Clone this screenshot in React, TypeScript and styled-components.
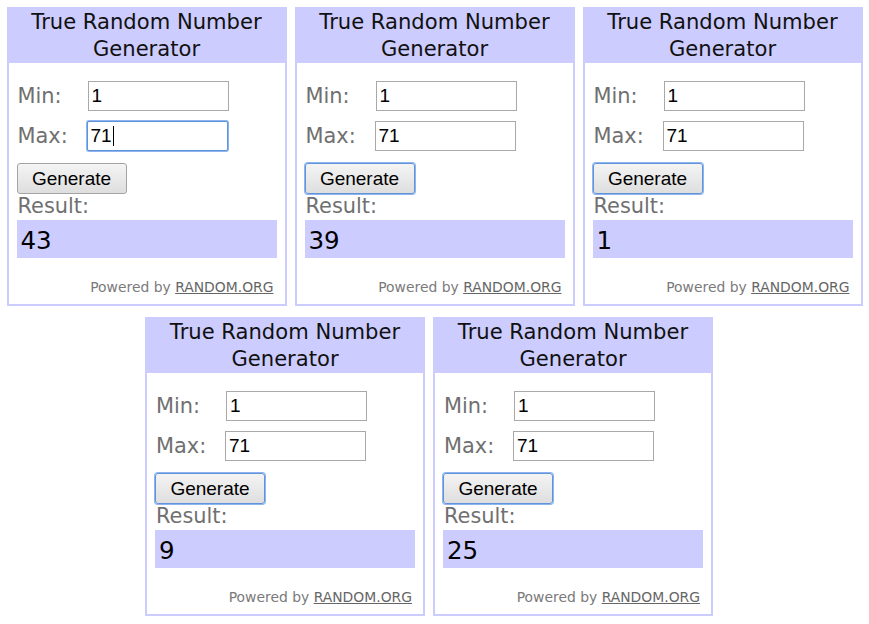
import React from "react";
import styled, { createGlobalStyle } from "styled-components";

const GlobalStyle = createGlobalStyle`
  html, body {
    margin: 0;
    padding: 0;
    background: #ffffff;
  }
  body {
    font-family: "DejaVu Sans", Verdana, sans-serif;
  }
`;

const Page = styled.div`
  display: flex;
  flex-direction: column;
  gap: 11px;
  padding-top: 7px;
  width: 869px;
`;

const Row = styled.div<{ $shift?: number }>`
  display: flex;
  justify-content: center;
  gap: 8px;
  padding-right: ${(p) => p.$shift ?? 0}px;
`;

const Card = styled.div`
  box-sizing: border-box;
  width: 280px;
  height: 299px;
  border: 2px solid #ccccff;
  background: #ffffff;
  display: flex;
  flex-direction: column;
`;

const Header = styled.div`
  background: #ccccff;
  height: 54px;
  box-sizing: border-box;
  padding-top: 0;
  text-align: center;
  font-family: "DejaVu Sans", Verdana, sans-serif;
  font-size: 21.1px;
  line-height: 26.5px;
  color: #111111;
`;

const Body = styled.div`
  display: flex;
  flex-direction: column;
  padding: 0 8px;
  flex: 1;
`;

const FieldRow = styled.div<{ $top: number }>`
  display: flex;
  align-items: center;
  margin-top: ${(p) => p.$top}px;
`;

const Label = styled.div`
  width: 70px;
  flex: none;
  font-family: "DejaVu Sans", Verdana, sans-serif;
  font-size: 20.9px;
  color: #707070;
  padding-left: 1px;
  box-sizing: border-box;
`;

const Field = styled.div<{ $focused?: boolean; $nudge?: number }>`
  box-sizing: border-box;
  width: 141px;
  height: 30px;
  margin-left: ${(p) => p.$nudge ?? 0}px;
  border: 1px solid ${(p) => (p.$focused ? "#5f93dc" : "#a9a9a9")};
  box-shadow: ${(p) => (p.$focused ? "0 0 0 1px #8db4ec" : "none")};
  border-radius: ${(p) => (p.$focused ? "2px" : "0")};
  background: #ffffff;
  display: flex;
  align-items: center;
  padding-left: 3px;
  font-family: "Liberation Sans", Arial, sans-serif;
  font-size: 19px;
  color: #000000;
`;

const Caret = styled.span`
  display: inline-block;
  width: 1px;
  height: 20px;
  background: #000000;
  margin-left: 1px;
`;

const Button = styled.button<{ $focused?: boolean }>`
  box-sizing: border-box;
  margin-top: 12px;
  align-self: flex-start;
  width: 110px;
  height: 31px;
  padding: 0;
  border: 1px solid ${(p) => (p.$focused ? "#5f93dc" : "#a3a3a3")};
  box-shadow: ${(p) => (p.$focused ? "0 0 0 1px #8db4ec" : "none")};
  border-radius: 3px;
  background: linear-gradient(#f4f4f4, #dedede);
  font-family: "Liberation Sans", Arial, sans-serif;
  font-size: 19px;
  color: #000000;
  cursor: pointer;
`;

const ResultLabel = styled.div`
  margin-top: 0px;
  font-family: "DejaVu Sans", Verdana, sans-serif;
  font-size: 20.9px;
  line-height: 24px;
  color: #707070;
  padding-left: 1px;
`;

const ResultBox = styled.div`
  margin-top: 2px;
  height: 38px;
  background: #ccccff;
  display: flex;
  align-items: center;
  padding-left: 4px;
  padding-top: 2px;
  box-sizing: border-box;
  font-family: "DejaVu Sans", Verdana, sans-serif;
  font-size: 24.5px;
  color: #000000;
`;

const Powered = styled.div`
  margin-top: 21px;
  text-align: right;
  padding-right: 3px;
  font-family: "DejaVu Sans", Verdana, sans-serif;
  font-size: 13.9px;
  line-height: 17px;
  color: #7a7a7a;
`;

const OrgLink = styled.span`
  color: #666666;
  text-decoration: underline;
`;

type WidgetProps = {
  result: string;
  maxFocused?: boolean;
  buttonFocused?: boolean;
};

function Widget({ result, maxFocused, buttonFocused }: WidgetProps) {
  return (
    <Card>
      <Header>
        True Random Number
        <br />
        Generator
      </Header>
      <Body>
        <FieldRow $top={18}>
          <Label>Min:</Label>
          <Field $nudge={1}>1</Field>
        </FieldRow>
        <FieldRow $top={10}>
          <Label>Max:</Label>
          <Field $focused={maxFocused}>
            71
            {maxFocused && <Caret />}
          </Field>
        </FieldRow>
        <Button $focused={buttonFocused}>Generate</Button>
        <ResultLabel>Result:</ResultLabel>
        <ResultBox>{result}</ResultBox>
        <Powered>
          Powered by <OrgLink>RANDOM.ORG</OrgLink>
        </Powered>
      </Body>
    </Card>
  );
}

export default function App() {
  return (
    <>
      <GlobalStyle />
      <Page>
        <Row>
          <Widget result="43" maxFocused />
          <Widget result="39" buttonFocused />
          <Widget result="1" buttonFocused />
        </Row>
        <Row $shift={11}>
          <Widget result="9" buttonFocused />
          <Widget result="25" buttonFocused />
        </Row>
      </Page>
    </>
  );
}
